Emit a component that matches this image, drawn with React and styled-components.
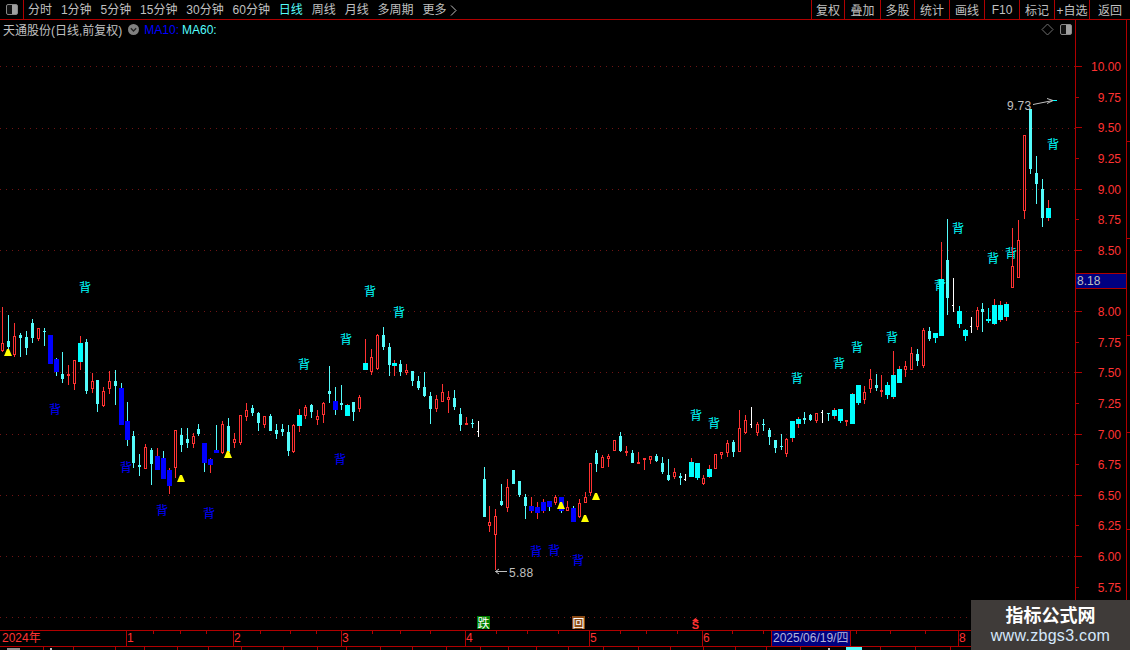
import styled, { createGlobalStyle } from 'styled-components'

const RED_LINE = '#b00000'
const RED = '#ff3232'
const CYAN = '#54fcfc'
const AQUA = '#00ffff'
const BLUE = '#0000ff'
const GRAY = '#c0c0c0'

const NAV = ['分时', '1分钟', '5分钟', '15分钟', '30分钟', '60分钟', '日线', '周线', '月线', '多周期']
const ACTIONS = [
  ['复权', 33], ['叠加', 36], ['多股', 34], ['统计', 35], ['画线', 35],
  ['F10', 35], ['标记', 35], ['+自选', 35], ['返回', 41],
]
const PRICES = ['10.00', '9.75', '9.50', '9.25', '9.00', '8.75', '8.50', '8.25', '8.00', '7.75', '7.50', '7.25', '7.00', '6.75', '6.50', '6.25', '6.00', '5.75']
const GRID_Y = [66, 128, 189, 250, 311, 372, 434, 495, 556, 617]

// x, high, low, body top, body bottom, kind
// r hollow red, R solid red, c thin cyan, C wide cyan red wick, D wide cyan,
// b blue red wick, B blue cyan wick, w white doji
const CANDLES = [
  [2, 307, 352, 343, 351, 'r'], [8, 315, 352, 341, 347, 'c'], [14, 323, 357, 336, 355, 'r'], [20, 333, 357, 335, 338, 'c'],
  [26, 331, 355, 337, 348, 'c'], [32, 319, 343, 323, 338, 'c'], [38, 328, 341, 328, 339, 'r'], [44, 328, 346, 331, 332, 'c'],
  [50, 335, 364, 335, 364, 'b'], [56, 358, 376, 359, 372, 'B'], [62, 352, 383, 374, 379, 'c'], [68, 365, 385, 374, 376, 'R'],
  [74, 360, 390, 360, 384, 'r'], [80, 336, 370, 343, 362, 'C'], [86, 339, 394, 342, 391, 'c'], [92, 373, 393, 381, 389, 'r'],
  [97, 380, 412, 380, 404, 'c'], [103, 387, 407, 391, 406, 'r'], [109, 371, 394, 381, 389, 'r'], [115, 370, 405, 381, 386, 'c'],
  [121, 383, 425, 388, 425, 'B'], [127, 402, 446, 421, 440, 'B'], [133, 431, 468, 436, 463, 'c'], [139, 454, 476, 465, 467, 'c'],
  [145, 444, 469, 447, 469, 'r'], [151, 448, 485, 450, 464, 'c'], [157, 448, 470, 456, 470, 'b'], [163, 451, 479, 458, 479, 'B'],
  [169, 468, 494, 470, 486, 'b'], [175, 430, 478, 430, 468, 'r'], [181, 428, 452, 435, 445, 'c'], [187, 428, 448, 439, 443, 'c'],
  [193, 433, 448, 436, 444, 'r'], [198, 424, 436, 429, 434, 'c'], [204, 443, 472, 443, 463, 'B'], [210, 458, 473, 459, 465, 'b'],
  [216, 425, 453, 450, 453, 'B'], [222, 421, 454, 424, 453, 'r'], [228, 418, 455, 426, 452, 'c'], [234, 433, 448, 439, 443, 'r'],
  [240, 415, 445, 415, 443, 'r'], [246, 403, 421, 410, 417, 'r'], [252, 405, 416, 408, 413, 'c'], [258, 412, 431, 413, 423, 'c'],
  [264, 416, 428, 416, 425, 'r'], [270, 414, 431, 416, 431, 'c'], [276, 424, 439, 430, 434, 'c'], [282, 424, 436, 429, 432, 'c'],
  [288, 425, 456, 432, 451, 'c'], [293, 424, 453, 425, 452, 'r'], [299, 409, 432, 415, 426, 'C'], [305, 405, 419, 407, 416, 'r'],
  [311, 404, 418, 405, 412, 'c'], [317, 410, 425, 416, 420, 'r'], [323, 402, 423, 403, 415, 'r'], [329, 366, 403, 391, 394, 'c'],
  [335, 387, 415, 401, 410, 'B'], [341, 385, 410, 403, 405, 'c'], [347, 404, 416, 405, 416, 'C'], [353, 402, 421, 402, 412, 'c'],
  [359, 395, 412, 397, 409, 'r'], [365, 339, 370, 363, 370, 'C'], [371, 349, 375, 357, 372, 'r'], [377, 334, 370, 335, 369, 'r'],
  [383, 327, 350, 335, 347, 'c'], [389, 343, 376, 347, 365, 'c'], [394, 360, 376, 363, 366, 'C'], [400, 360, 376, 364, 372, 'c'],
  [406, 364, 375, 370, 373, 'r'], [412, 371, 386, 371, 381, 'c'], [418, 376, 390, 381, 388, 'c'], [424, 372, 397, 387, 396, 'c'],
  [430, 392, 424, 396, 409, 'c'], [436, 395, 412, 399, 409, 'r'], [442, 384, 402, 392, 402, 'r'], [448, 391, 413, 397, 400, 'r'],
  [454, 390, 410, 398, 407, 'c'], [460, 408, 431, 414, 425, 'c'], [466, 417, 425, 423, 425, 'R'], [472, 419, 428, 423, 424, 'c'],
  [478, 421, 437, 431, 432, 'w'], [484, 467, 517, 479, 517, 'c'], [489, 506, 532, 522, 526, 'r'], [495, 509, 570, 516, 535, 'r'],
  [501, 484, 506, 501, 505, 'c'], [507, 479, 512, 487, 508, 'r'], [513, 470, 484, 470, 484, 'c'], [519, 481, 497, 481, 495, 'c'],
  [525, 494, 519, 497, 506, 'c'], [531, 497, 513, 506, 511, 'b'], [537, 502, 519, 507, 513, 'b'], [543, 499, 513, 502, 511, 'b'],
  [549, 501, 511, 501, 507, 'B'], [555, 495, 505, 497, 503, 'r'], [561, 497, 513, 497, 511, 'B'], [567, 501, 511, 507, 511, 'r'],
  [573, 506, 522, 508, 522, 'B'], [579, 499, 518, 503, 517, 'r'], [585, 492, 503, 497, 503, 'r'], [590, 463, 496, 463, 493, 'r'],
  [596, 450, 472, 453, 464, 'c'], [602, 455, 468, 457, 468, 'r'], [608, 454, 467, 456, 459, 'r'], [614, 440, 451, 440, 451, 'r'],
  [620, 432, 452, 436, 451, 'c'], [626, 446, 456, 451, 453, 'R'], [632, 450, 463, 453, 463, 'c'], [638, 452, 464, 462, 464, 'R'],
  [644, 458, 470, 458, 460, 'R'], [650, 456, 464, 456, 460, 'r'], [656, 454, 462, 456, 461, 'c'], [662, 457, 474, 463, 472, 'c'],
  [668, 459, 481, 475, 480, 'c'], [674, 468, 479, 472, 477, 'r'], [680, 473, 485, 476, 478, 'c'], [685, 474, 481, 479, 480, 'w'],
  [691, 458, 477, 462, 477, 'C'], [697, 463, 480, 463, 478, 'D'], [703, 475, 485, 478, 484, 'r'], [709, 465, 478, 469, 477, 'C'],
  [715, 454, 469, 454, 469, 'r'], [721, 452, 459, 452, 455, 'r'], [727, 440, 457, 443, 453, 'r'], [733, 440, 457, 442, 452, 'c'],
  [739, 410, 452, 428, 452, 'r'], [745, 415, 434, 420, 433, 'r'], [751, 407, 428, 424, 425, 'w'], [757, 422, 436, 424, 433, 'r'],
  [763, 419, 431, 424, 425, 'c'], [769, 428, 445, 430, 437, 'c'], [775, 440, 453, 440, 448, 'c'], [781, 434, 450, 446, 447, 'c'],
  [786, 438, 457, 439, 454, 'r'], [792, 421, 442, 421, 438, 'C'], [798, 417, 428, 419, 424, 'C'], [804, 412, 424, 418, 420, 'c'],
  [810, 414, 421, 415, 420, 'c'], [816, 413, 423, 413, 421, 'r'], [822, 410, 423, 412, 413, 'w'], [828, 413, 421, 413, 414, 'c'],
  [834, 408, 419, 410, 416, 'C'], [840, 409, 423, 409, 421, 'D'], [846, 420, 426, 420, 422, 'R'], [852, 393, 424, 394, 424, 'C'],
  [858, 385, 405, 385, 403, 'D'], [864, 386, 404, 392, 400, 'r'], [870, 369, 393, 379, 389, 'r'], [876, 374, 391, 385, 388, 'c'],
  [881, 375, 397, 390, 392, 'R'], [887, 382, 399, 385, 395, 'D'], [893, 351, 399, 375, 397, 'C'], [899, 366, 383, 369, 383, 'C'],
  [905, 361, 377, 366, 370, 'r'], [911, 347, 370, 353, 370, 'r'], [917, 349, 366, 354, 361, 'c'], [923, 328, 368, 330, 366, 'r'],
  [929, 327, 341, 331, 339, 'c'], [935, 333, 343, 333, 338, 'D'], [941, 242, 336, 279, 336, 'C'], [947, 219, 315, 260, 298, 'c'],
  [953, 278, 312, 305, 306, 'w'], [959, 306, 328, 311, 324, 'D'], [965, 329, 341, 330, 336, 'D'], [971, 317, 333, 326, 327, 'w'],
  [977, 307, 330, 310, 327, 'r'], [982, 303, 332, 309, 312, 'c'], [988, 308, 323, 319, 321, 'D'], [994, 299, 325, 305, 324, 'C'],
  [1000, 301, 322, 305, 320, 'C'], [1006, 302, 321, 304, 317, 'C'], [1012, 228, 288, 266, 288, 'r'], [1018, 220, 278, 240, 278, 'r'],
  [1024, 135, 219, 135, 211, 'r'], [1030, 109, 174, 109, 169, 'c'], [1036, 156, 204, 173, 184, 'c'], [1042, 179, 227, 189, 218, 'c'],
  [1048, 200, 221, 208, 218, 'C'],
]

const KINDS = {
  r: { wick: RED, hollow: true, w: 3 },
  R: { wick: RED, body: RED, w: 3 },
  c: { wick: CYAN, body: CYAN, w: 3 },
  C: { wick: RED, body: AQUA, w: 5 },
  D: { wick: AQUA, body: AQUA, w: 5 },
  b: { wick: RED, body: BLUE, w: 5 },
  B: { wick: CYAN, body: BLUE, w: 5 },
  w: { wick: '#ffffff', body: '#ffffff', w: 2, doji: true },
}

const BEI_CYAN = [[85, 287], [370, 291], [399, 312], [346, 339], [304, 364], [958, 228], [1053, 144], [993, 258], [1011, 253], [940, 285], [892, 337], [857, 347], [839, 363], [797, 378], [696, 415], [714, 423]]
const BEI_BLUE = [[55, 409], [126, 467], [340, 459], [162, 510], [209, 513], [536, 551], [554, 550], [578, 560]]
const TRIANGLES = [[8, 349], [181, 475], [228, 451], [561, 502], [585, 515], [596, 493]]

const MONTHS = [
  ['2024年', 127], ['1', 107], ['2', 108], ['3', 124], ['4', 124], ['5', 113], ['6', 69],
]
const TOP_TICKS = [153, 180, 206, 260, 290, 316, 372, 400, 430, 496, 527, 558, 620, 646, 677, 732, 763, 856, 890, 925]
const UNDER_TICKS = [43, 73, 115, 144, 177, 208, 241, 283, 317, 346, 380, 412, 446, 480, 508, 536, 568, 603, 638, 670, 703, 735, 766, 800, 880, 915, 950]

const Candle = ({ x, hi, lo, top, bot, kind }) => {
  const k = KINDS[kind]
  const h = Math.max(bot - top, 1)
  if (k.doji) {
    return (
      <g>
        <rect x={x} y={hi} width={1} height={lo - hi} fill={k.wick} />
        <rect x={x - 1} y={top} width={1} height={1} fill={k.wick} />
      </g>
    )
  }
  return (
    <g>
      <rect x={x} y={hi} width={1} height={lo - hi} fill={k.wick} />
      {k.hollow ? (
        <rect x={x - 0.5} y={top + 0.5} width={2} height={Math.max(h - 1, 1)} fill="#000" stroke={RED} />
      ) : (
        <rect x={x - (k.w - 1) / 2} y={top} width={k.w} height={h} fill={k.body} />
      )}
    </g>
  )
}

function App() {
  return (
    <Page>
      <GlobalStyle />
      <Toolbar>
        <LeftCell>
          <PanelIcon />
        </LeftCell>
        <Nav>
          {NAV.map((item) => (
            <NavItem key={item} $active={item === '日线'}>{item}</NavItem>
          ))}
          <NavItem>
            更多
            <svg width="7" height="11" viewBox="0 0 7 11" style={{ marginLeft: 4 }}>
              <path d="M1 0.5 L6 5.5 L1 10.5" fill="none" stroke={GRAY} />
            </svg>
          </NavItem>
        </Nav>
        <Actions>
          {ACTIONS.map(([label, width]) => (
            <ActionBtn key={label} $w={width}>{label}</ActionBtn>
          ))}
        </Actions>
      </Toolbar>

      <ChartRow>
        <Plot>
          <InfoRow>
            <StockName>天通股份(日线,前复权)</StockName>
            <Chevron>
              <svg width="11" height="11" viewBox="0 0 11 11">
                <circle cx="5.5" cy="5.5" r="5.5" fill="#808080" />
                <path d="M2.8 4.2 L5.5 7 L8.2 4.2" fill="none" stroke="#222" strokeWidth="1.3" />
              </svg>
            </Chevron>
            <MaLabel $color={BLUE}>MA10:</MaLabel>
            <MaLabel $color={CYAN}>MA60:</MaLabel>
            <InfoTools>
              <svg width="13" height="13" viewBox="0 0 13 13">
                <path d="M6.5 1 L12 6.5 L6.5 12 L1 6.5 Z" fill="none" stroke="#707070" />
              </svg>
              <PanelIcon />
            </InfoTools>
          </InfoRow>

          <ChartSvg width="1075" height="610" viewBox="0 20 1075 610">
            {GRID_Y.map((y) => (
              <line key={y} x1="0" x2="1075" y1={y + 0.5} y2={y + 0.5} stroke="#701414" strokeDasharray="1 5" />
            ))}
            {BEI_CYAN.map(([x, y]) => (
              <BeiText key={`${x}-${y}`} x={x} y={y + 5} fill={AQUA}>背</BeiText>
            ))}
            {BEI_BLUE.map(([x, y]) => (
              <BeiText key={`${x}-${y}`} x={x} y={y + 5} fill={BLUE}>背</BeiText>
            ))}
            {CANDLES.map(([x, hi, lo, top, bot, kind]) => (
              <Candle key={x} x={x} hi={hi} lo={lo} top={top} bot={bot} kind={kind} />
            ))}
            {TRIANGLES.map(([x, y]) => (
              <polygon key={x} points={`${x - 1},${y} ${x + 1},${y} ${x + 4},${y + 7} ${x - 4},${y + 7}`} fill="#ffff00" />
            ))}
            <path d="M495.5 571.5 H507 M495.5 571.5 L499 569 M495.5 571.5 L499 574" fill="none" stroke={GRAY} />
            <PriceNote x="509" y="577">5.88</PriceNote>
            <PriceNote x="1007" y="110">9.73</PriceNote>
            <path d="M1033 104.5 L1053 100.5 M1053 100.5 L1047 98.5 M1053 100.5 L1047 103.5" fill="none" stroke={GRAY} />
            <rect x="1053" y="100" width="4" height="1" fill={AQUA} />
          </ChartSvg>

          <Signal $left={477} $bg="#008000">跌</Signal>
          <Signal $left={572} $bg="#8b4a14">回</Signal>
          <SellMark>
            <svg width="7" height="3" viewBox="0 0 7 3">
              <polygon points="3.5,0 7,3 0,3" fill={RED} />
            </svg>
            <span>S</span>
          </SellMark>
        </Plot>

        <PriceAxis>
          {PRICES.map((price, i) => (
            <PriceRow key={price} $major={i % 2 === 0}>
              {price !== '8.25' && price}
            </PriceRow>
          ))}
          <LastPrice>8.18</LastPrice>
        </PriceAxis>
        <SideStrip />
      </ChartRow>

      <TimeAxis>
        {MONTHS.map(([label, width]) => (
          <Month key={label} $w={width}>{label}</Month>
        ))}
        <DateBox>2025/06/19/四</DateBox>
        <Month $w={108} />
        <Month $w={13}>8</Month>
        <AxisTicks width="971" height="3">
          {TOP_TICKS.map((x) => (
            <rect key={x} x={x} y="0" width="1" height="3" fill={RED_LINE} />
          ))}
        </AxisTicks>
      </TimeAxis>
      <UnderRow>
        <svg width="1130" height="3">
          {UNDER_TICKS.map((x) => (
            <rect key={x} x={x} y="0" width="1" height="3" fill={RED_LINE} />
          ))}
          <rect x="7" y="1" width="13" height="2" fill="#909090" />
          <rect x="50" y="1" width="2" height="2" fill="#c0c0c0" />
          <rect x="828" y="1" width="2" height="2" fill="#c0c0c0" />
          <rect x="846" y="0" width="16" height="3" fill={CYAN} />
        </svg>
      </UnderRow>

      <Watermark>
        <WatermarkTitle>指标公式网</WatermarkTitle>
        <WatermarkUrl>www.zbgs3.com</WatermarkUrl>
      </Watermark>
    </Page>
  )
}

export default App

const GlobalStyle = createGlobalStyle`
  html, body {
    margin: 0;
    padding: 0;
    background: #000;
  }
`

const Page = styled.div`
  position: relative;
  display: flex;
  flex-direction: column;
  width: 1130px;
  height: 650px;
  overflow: hidden;
  background: #000;
  color: ${GRAY};
  font-family: "Noto Sans CJK SC", "Liberation Sans", sans-serif;
  font-size: 12px;
`

const Toolbar = styled.div`
  display: flex;
  align-items: stretch;
  height: 19px;
  flex: none;
  border-bottom: 1px solid ${RED_LINE};
  box-sizing: content-box;
`

const LeftCell = styled.div`
  display: flex;
  align-items: center;
  justify-content: center;
  width: 23px;
  border-right: 1px solid ${RED_LINE};
`

const PanelIcon = styled.span`
  display: block;
  width: 12px;
  height: 11px;
  box-sizing: border-box;
  border: 1px solid #888;
  border-radius: 2px;
  background: linear-gradient(to right, #111 50%, #a0a0a0 50%);
`

const Nav = styled.div`
  display: flex;
  align-items: center;
  gap: 8.9px;
  margin-left: 4px;
  font-family: "Liberation Sans", "Noto Sans CJK SC", sans-serif;
`

const NavItem = styled.span`
  display: flex;
  align-items: center;
  line-height: 19px;
  padding-top: 1px;
  color: ${({ $active }) => ($active ? CYAN : GRAY)};
`

const Actions = styled.div`
  display: flex;
  margin-left: auto;
  font-family: "Liberation Sans", "Noto Sans CJK SC", sans-serif;
`

const ActionBtn = styled.div`
  display: flex;
  align-items: center;
  justify-content: center;
  width: ${({ $w }) => $w}px;
  box-sizing: border-box;
  border-left: 1px solid ${RED_LINE};
`

const ChartRow = styled.div`
  display: flex;
  height: 610px;
  flex: none;
`

const Plot = styled.div`
  position: relative;
  width: 1075px;
  flex: none;
`

const InfoRow = styled.div`
  position: absolute;
  top: 0;
  left: 3px;
  right: 3px;
  height: 19px;
  display: flex;
  align-items: center;
  font-family: "Liberation Sans", "Noto Sans CJK SC", sans-serif;
`

const StockName = styled.span`
  color: ${GRAY};
  white-space: nowrap;
`

const Chevron = styled.span`
  display: flex;
  margin: 0 5px 0 6px;
`

const MaLabel = styled.span`
  color: ${({ $color }) => $color};
  margin-right: 3px;
`

const InfoTools = styled.div`
  display: flex;
  align-items: center;
  gap: 6px;
  margin-left: auto;
`

const ChartSvg = styled.svg`
  display: block;
`

const BeiText = styled.text`
  font-family: "Noto Sans CJK SC", sans-serif;
  font-size: 12px;
  text-anchor: middle;
`

const PriceNote = styled.text`
  font-family: "Liberation Sans", sans-serif;
  font-size: 12px;
  letter-spacing: 0.3px;
  fill: ${GRAY};
`

const Signal = styled.span`
  position: absolute;
  top: 596px;
  left: ${({ $left }) => $left}px;
  width: 13px;
  height: 13px;
  display: flex;
  align-items: center;
  justify-content: center;
  background: ${({ $bg }) => $bg};
  color: #fff;
  font-size: 12px;
  line-height: 13px;
`

const SellMark = styled.span`
  position: absolute;
  top: 598px;
  left: 692px;
  width: 7px;
  display: flex;
  flex-direction: column;
  align-items: center;
  color: ${RED};
  font-family: "Liberation Sans", sans-serif;
  font-weight: bold;
  font-size: 11px;
  line-height: 9px;

  svg {
    display: block;
  }
`

const PriceAxis = styled.div`
  position: relative;
  width: 51px;
  flex: none;
  box-sizing: border-box;
  padding-top: 31px;
  border-left: 1px solid ${RED_LINE};
  font-family: "Liberation Sans", sans-serif;
  color: ${RED};
`

const PriceRow = styled.div`
  position: relative;
  height: 30.63px;
  line-height: 33px;
  padding-right: 5px;
  text-align: right;

  &::before {
    content: '';
    position: absolute;
    left: 0;
    top: 15px;
    height: 1px;
    width: ${({ $major }) => ($major ? 6 : 3)}px;
    background: ${RED_LINE};
  }
`

const LastPrice = styled.div`
  position: absolute;
  top: 253px;
  left: 0;
  right: 0;
  height: 16px;
  box-sizing: border-box;
  padding-left: 1px;
  line-height: 14px;
  background: #000080;
  border-top: 1px solid ${RED_LINE};
  border-bottom: 1px solid ${RED_LINE};
  color: ${GRAY};
`

const SideStrip = styled.div`
  width: 4px;
  flex: none;
  border-left: 1px solid ${RED_LINE};
  background: repeating-linear-gradient(
    to bottom,
    transparent 0,
    transparent 96px,
    ${RED_LINE} 96px,
    ${RED_LINE} 97px
  ) 0 25px;
`

const TimeAxis = styled.div`
  position: relative;
  display: flex;
  height: 17px;
  flex: none;
  box-sizing: border-box;
  border-top: 1px solid ${RED_LINE};
  border-bottom: 1px solid ${RED_LINE};
  font-family: "Liberation Sans", "Noto Sans CJK SC", sans-serif;
  color: ${RED};
`

const Month = styled.div`
  width: ${({ $w }) => $w}px;
  flex: none;
  box-sizing: border-box;
  padding-left: 0;
  line-height: 15px;
  border-right: 1px solid ${RED_LINE};
  white-space: nowrap;

  &:first-child {
    padding-left: 2px;
  }
`

const DateBox = styled.div`
  width: 79px;
  flex: none;
  box-sizing: border-box;
  padding-left: 1px;
  line-height: 15px;
  background: #000080;
  border-right: 1px solid ${RED_LINE};
  color: #b4b4d8;
  white-space: nowrap;
  overflow: hidden;
`

const AxisTicks = styled.svg`
  position: absolute;
  top: 0;
  left: 0;
`

const UnderRow = styled.div`
  height: 3px;
  flex: none;
  overflow: hidden;

  svg {
    display: block;
  }
`

const Watermark = styled.div`
  position: absolute;
  right: 0;
  bottom: 0;
  width: 159px;
  height: 50px;
  display: flex;
  flex-direction: column;
  align-items: center;
  background: #3f3b39;
`

const WatermarkTitle = styled.div`
  color: #fff;
  font-family: "Noto Sans CJK SC", sans-serif;
  font-weight: bold;
  font-size: 18px;
  line-height: 27px;
  margin-top: 1px;
`

const WatermarkUrl = styled.div`
  color: #d5e8fb;
  font-family: "Liberation Sans", sans-serif;
  font-size: 16px;
  letter-spacing: 0.3px;
  line-height: 16px;
`
